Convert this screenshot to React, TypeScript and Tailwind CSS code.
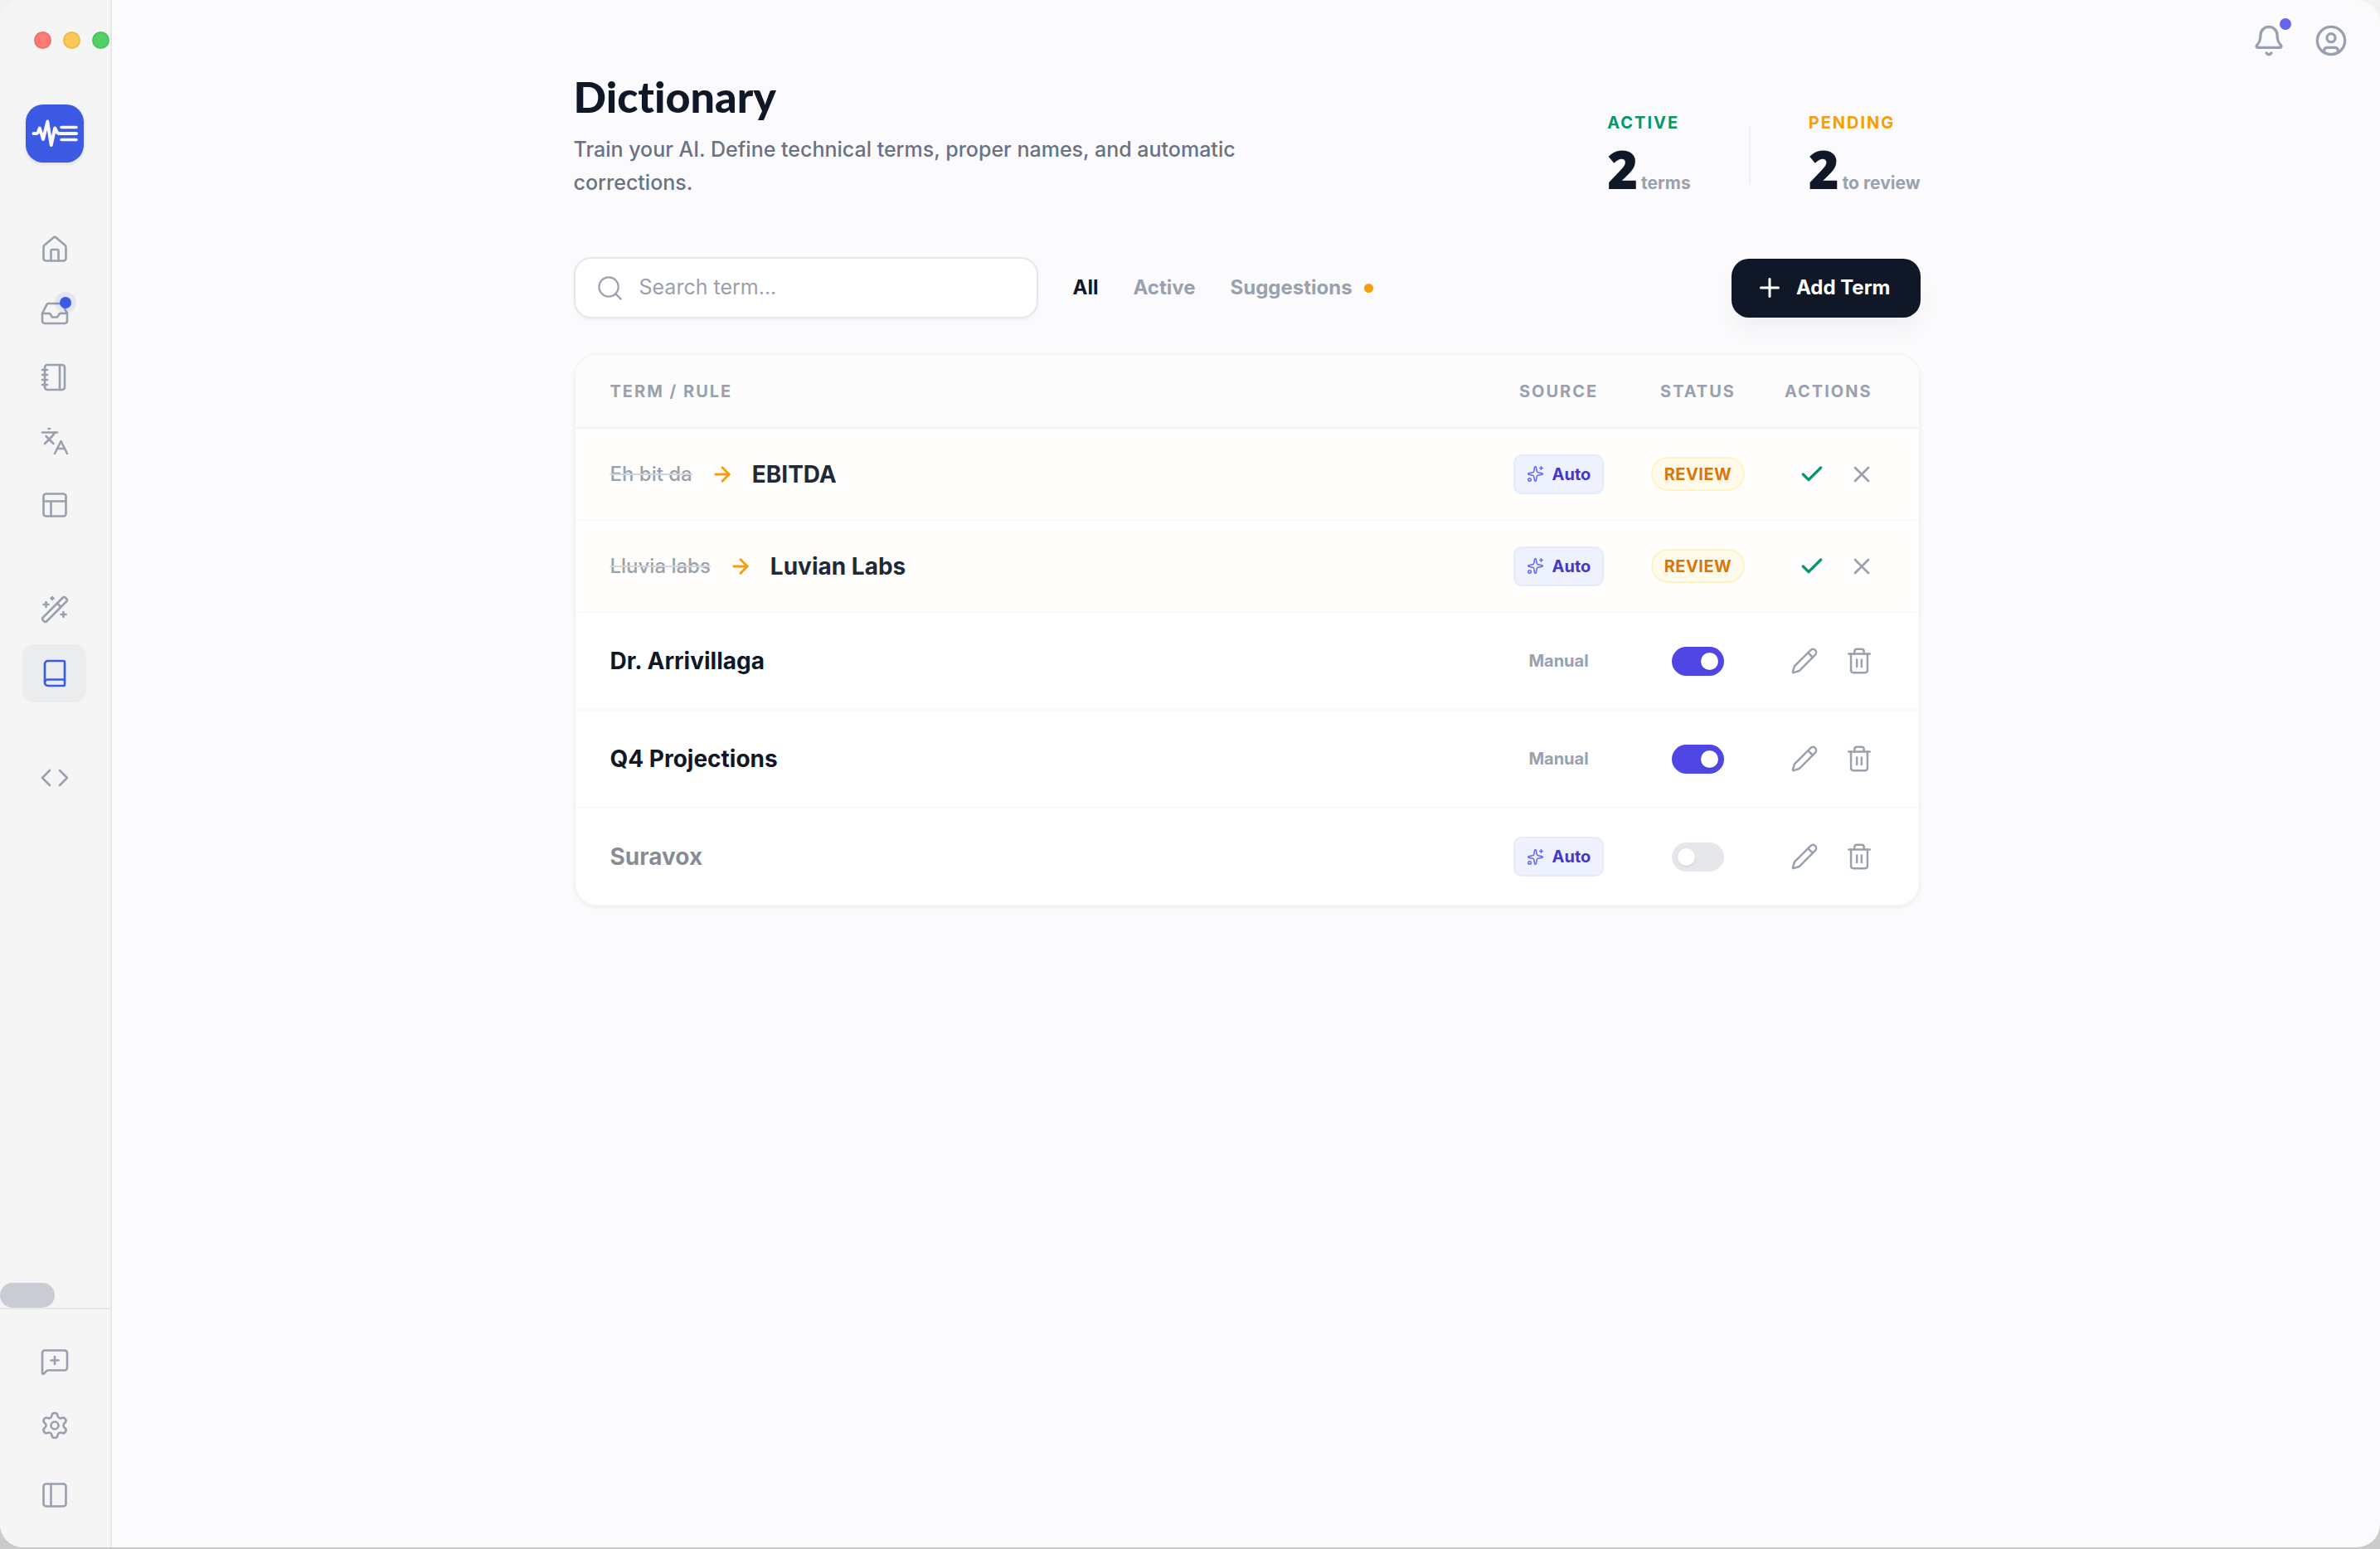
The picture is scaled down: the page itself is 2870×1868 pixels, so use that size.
import * as React from "react";
import {
  ArrowRight,
  Bell,
  Book,
  Check,
  CircleUser,
  Code,
  House,
  Inbox,
  Languages,
  MessageSquarePlus,
  Notebook,
  PanelLeft,
  PanelsTopLeft,
  Pencil,
  Plus,
  Search,
  Settings,
  Sparkles,
  Trash2,
  WandSparkles,
  X,
  type LucideIcon,
} from "lucide-react";

interface NavItem {
  label: string;
  icon: LucideIcon;
  hasUnread?: boolean;
}

interface Term {
  id: number;
  original?: string;
  term: string;
  source: "auto" | "manual";
  status: "review" | "on" | "off";
}

const NAV_GROUPS: NavItem[][] = [
  [
    { label: "Home", icon: House },
    { label: "Inbox", icon: Inbox, hasUnread: true },
    { label: "Notes", icon: Notebook },
    { label: "Translate", icon: Languages },
    { label: "Templates", icon: PanelsTopLeft },
  ],
  [
    { label: "Styles", icon: WandSparkles },
    { label: "Dictionary", icon: Book },
  ],
  [{ label: "Developers", icon: Code }],
];

const INITIAL_TERMS: Term[] = [
  { id: 1, original: "Eh bit da", term: "EBITDA", source: "auto", status: "review" },
  { id: 2, original: "Lluvia labs", term: "Luvian Labs", source: "auto", status: "review" },
  { id: 3, term: "Dr. Arrivillaga", source: "manual", status: "on" },
  { id: 4, term: "Q4 Projections", source: "manual", status: "on" },
  { id: 5, term: "Suravox", source: "auto", status: "off" },
];

const Logo: React.FC = () => (
  <div className="w-[70px] h-[70px] rounded-[21px] bg-[#3d5ae5] shadow-[0_2px_4px_rgba(0,0,0,0.1)]">
    <svg
      viewBox="0 0 70 70"
      fill="none"
      stroke="#f8f8fa"
      strokeWidth="4"
      strokeLinecap="round"
      strokeLinejoin="round"
    >
      <path d="M9.500 35H12.500Q14.500 35 15.300 32.500L16.800 28.500L21 42L26.300 20.500L30.700 49L35.200 28.500L37.500 33Q38.500 35 41 35H61" />
      <path d="M43 27.500H61M43 42.500H61" strokeWidth="3.500" />
    </svg>
  </div>
);

const SidebarLink: React.FC<{ item: NavItem; active?: boolean }> = ({
  item,
  active,
}) => {
  const Icon = item.icon;
  return (
    <a
      href="#"
      aria-label={item.label}
      aria-current={active ? "page" : undefined}
      className={
        "flex items-center justify-center w-[77px] h-[70px] rounded-[14px] " +
        (active ? "bg-[#ebecee] text-[#3d5ae5]" : "text-gray-400")
      }
    >
      <span className="relative">
        <Icon size={36} strokeWidth={1.75} />
        {item.hasUnread && (
          <span className="absolute -top-2 -right-2 flex items-center justify-center w-[26px] h-[26px] rounded-full bg-[#3d5ae5]/10">
            <span className="w-[14px] h-[14px] rounded-full bg-[#3d5ae5]" />
          </span>
        )}
      </span>
    </a>
  );
};

const Sidebar: React.FC = () => (
  <aside className="flex flex-col w-[135px] shrink-0 bg-[#f5f5f5] border-r-2 border-gray-200">
    <div className="flex gap-[14px] self-end pt-[38px] pr-px">
      <span className="w-[21px] h-[21px] rounded-full bg-[#ff7b75] border-2 border-[#ee706b]" />
      <span className="w-[21px] h-[21px] rounded-full bg-[#fdc855] border-2 border-[#eebb50]" />
      <span className="w-[21px] h-[21px] rounded-full bg-[#53d167] border-2 border-[#4bc35e]" />
    </div>
    <div className="pt-[67px] pb-[70px] pl-[31px]">
      <Logo />
    </div>
    <nav className="flex flex-col gap-14 grow pl-[27px]">
      {NAV_GROUPS.map((group, index) => (
        <div key={index} className="flex flex-col gap-[7px]">
          {group.map((item) => (
            <SidebarLink
              key={item.label}
              item={item}
              active={item.label === "Dictionary"}
            />
          ))}
        </div>
      ))}
    </nav>
    <div className="w-[66px] h-[30px] rounded-full bg-[#c9ccd3]" />
    <div className="flex flex-col py-7 pl-[27px] border-t-2 border-gray-200">
      <div className="flex flex-col gap-[7px] pb-[14px]">
        <SidebarLink item={{ label: "Feedback", icon: MessageSquarePlus }} />
        <SidebarLink item={{ label: "Settings", icon: Settings }} />
      </div>
      <SidebarLink item={{ label: "Toggle sidebar", icon: PanelLeft }} />
    </div>
  </aside>
);

interface StatProps {
  label: string;
  labelColor: string;
  count: number;
  unit: string;
}

const Stat: React.FC<StatProps> = (props) => (
  <div className="pb-1">
    <div
      className={
        "text-[20px] leading-7 font-bold tracking-widest " + props.labelColor
      }
    >
      {props.label}
    </div>
    <div className="flex items-baseline gap-1 pt-[10px]">
      <span className="font-[Open_Sans] font-extrabold text-[63px] leading-[63px] text-gray-900">
        {props.count}
      </span>
      <span className="text-[21px] font-bold text-gray-400">{props.unit}</span>
    </div>
  </div>
);

const SourceBadge: React.FC<{ source: Term["source"] }> = ({ source }) => {
  if (source === "manual") {
    return <span className="text-[20px] font-bold text-gray-400">Manual</span>;
  }
  return (
    <span className="inline-flex items-center gap-[10px] h-12 px-[14px] rounded-[10px] border-2 border-[#e5ebff] bg-[#eef2ff] text-[20px] font-bold text-[#4338ca] align-middle">
      <Sparkles size={21} strokeWidth={1.75} className="text-[#6366f1]" />
      Auto
    </span>
  );
};

interface TermRowProps {
  item: Term;
  onChangeStatus: (id: number, status: Term["status"]) => void;
  onRemove: (id: number) => void;
}

const TermRow: React.FC<TermRowProps> = ({ item, onChangeStatus, onRemove }) => {
  const isReview = item.status === "review";

  let statusElement;
  let actionsElement;

  if (isReview) {
    statusElement = (
      <span className="inline-flex items-center h-[41px] px-[14px] rounded-full border-2 border-[#fef3c7] bg-[#fffbeb] text-[20px] font-bold tracking-wide text-[#d97706] align-middle">
        REVIEW
      </span>
    );
    actionsElement = (
      <div className="flex justify-end gap-[14px]">
        <button
          aria-label={"Accept " + item.term}
          className="p-[7px] text-[#059669]"
          onClick={() => onChangeStatus(item.id, "on")}
        >
          <Check size={32} strokeWidth={2.5} />
        </button>
        <button
          aria-label={"Dismiss " + item.term}
          className="p-[7px] text-gray-400"
          onClick={() => onRemove(item.id)}
        >
          <X size={32} strokeWidth={2} />
        </button>
      </div>
    );
  } else {
    statusElement = (
      <input
        type="checkbox"
        role="switch"
        aria-label={item.term + " enabled"}
        checked={item.status === "on"}
        onChange={(e) => onChangeStatus(item.id, e.target.checked ? "on" : "off")}
        className="appearance-none inline-flex w-[63px] h-[35px] p-[7px] rounded-full bg-gray-200 checked:bg-[#4f46e5] checked:justify-end align-middle before:block before:w-[21px] before:h-[21px] before:rounded-full before:bg-white before:shadow-sm"
      />
    );
    actionsElement = (
      <div className="flex justify-end gap-[14px]">
        <button
          aria-label={"Edit " + item.term}
          className="p-[9px] text-gray-400"
        >
          <Pencil size={34} strokeWidth={1.75} />
        </button>
        <button
          aria-label={"Delete " + item.term}
          className="p-[9px] text-gray-400"
          onClick={() => onRemove(item.id)}
        >
          <Trash2 size={34} strokeWidth={1.75} />
        </button>
      </div>
    );
  }

  return (
    <tr
      className={
        "border-b-2 border-gray-50 last:border-b-0 " +
        (isReview ? "h-[111px] bg-[#fffefc]" : "h-[118px] last:h-[117px]")
      }
    >
      <td className="pl-[42px]">
        <div className="flex items-center gap-[22px]">
          {item.original && (
            <>
              <span className="text-[24px] font-medium text-gray-400 line-through decoration-gray-300">
                {item.original}
              </span>
              <ArrowRight
                size={28}
                strokeWidth={2.5}
                className="text-[#f59e0b]"
              />
            </>
          )}
          <span
            className={
              "text-[28px] font-bold " +
              (isReview
                ? "text-gray-800"
                : item.status === "off"
                ? "text-gray-900/50"
                : "text-gray-900")
            }
          >
            {item.term}
          </span>
        </div>
      </td>
      <td className="text-center">
        <SourceBadge source={item.source} />
      </td>
      <td className="text-center">{statusElement}</td>
      <td className="pr-[46px]">{actionsElement}</td>
    </tr>
  );
};

const FILTERS = ["All", "Active", "Suggestions"];

const DictionaryView: React.FC = () => {
  const [terms, setTerms] = React.useState(INITIAL_TERMS);
  const [filter, setFilter] = React.useState("All");
  const [query, setQuery] = React.useState("");

  const changeStatus = (id: number, status: Term["status"]) => {
    setTerms(terms.map((t) => (t.id === id ? { ...t, status } : t)));
  };

  const remove = (id: number) => {
    setTerms(terms.filter((t) => t.id !== id));
  };

  const activeCount = terms.filter((t) => t.status === "on").length;
  const pendingCount = terms.filter((t) => t.status === "review").length;

  const visibleTerms = terms.filter((t) => {
    if (filter === "Active" && t.status !== "on") return false;
    if (filter === "Suggestions" && t.status !== "review") return false;
    return t.term.toLowerCase().includes(query.toLowerCase());
  });

  return (
    <div className="w-full max-w-[1624px] mx-auto">
      <header className="flex items-end justify-between">
        <div className="max-w-[810px]">
          <h1 className="font-[Lato] font-black text-[52px] leading-[60px] text-gray-900 [font-variant-ligatures:none]">
            Dictionary
          </h1>
          <p className="pt-[14px] text-[25px] leading-10 font-medium text-gray-500">
            Train your AI. Define technical terms, proper names, and automatic
            corrections.
          </p>
        </div>
        <div className="flex items-center gap-[70px]">
          <Stat
            label="ACTIVE"
            labelColor="text-[#059669]"
            count={activeCount}
            unit="terms"
          />
          <div className="w-[2px] h-[70px] bg-[#eeeff1]" />
          <Stat
            label="PENDING"
            labelColor="text-[#f59e0b]"
            count={pendingCount}
            unit="to review"
          />
        </div>
      </header>

      <div className="flex items-center gap-[42px] pt-[70px]">
        <label className="flex items-center gap-[18px] w-[560px] h-[74px] px-6 rounded-[21px] border-2 border-gray-200 bg-white shadow-[0_2px_4px_rgba(0,0,0,0.05)]">
          <Search
            size={35}
            strokeWidth={1.5}
            className="shrink-0 text-gray-400"
          />
          <input
            type="text"
            aria-label="Search term"
            placeholder="Search term..."
            value={query}
            onChange={(e) => setQuery(e.target.value)}
            className="min-w-0 grow text-[25px] text-gray-900 placeholder:text-gray-400 outline-none"
          />
        </label>
        {FILTERS.map((name) => (
          <button
            key={name}
            onClick={() => setFilter(name)}
            className={
              "flex items-center gap-[14px] text-[24px] font-bold " +
              (filter === name ? "text-gray-900" : "text-gray-400")
            }
          >
            {name}
            {name === "Suggestions" && pendingCount > 0 && (
              <span className="w-[11px] h-[11px] rounded-full bg-[#f59e0b]" />
            )}
          </button>
        ))}
        <button className="flex items-center gap-[14px] h-[71px] ml-auto pl-7 pr-9 rounded-[21px] bg-gray-900 text-[24px] font-bold text-white shadow-[0_16px_28px_-4px_#eeeff2]">
          <Plus size={36} strokeWidth={2} />
          Add Term
        </button>
      </div>

      <div className="mt-[42px] rounded-[28px] border-2 border-gray-100 bg-white shadow-[0_2px_4px_rgba(0,0,0,0.05)] overflow-hidden">
        <table className="w-full table-fixed">
          <thead>
            <tr className="h-[88px] border-b-2 border-gray-100 bg-[#fcfcfd] text-[20px] text-gray-400 tracking-widest">
              <th className="pl-[42px] text-left font-bold">TERM / RULE</th>
              <th className="w-[168px] font-bold">SOURCE</th>
              <th className="w-[168px] font-bold">STATUS</th>
              <th className="w-[182px] pr-14 text-right font-bold">ACTIONS</th>
            </tr>
          </thead>
          <tbody>
            {visibleTerms.map((item) => (
              <TermRow
                key={item.id}
                item={item}
                onChangeStatus={changeStatus}
                onRemove={remove}
              />
            ))}
          </tbody>
        </table>
      </div>
    </div>
  );
};

const App: React.FC = () => (
  <div className="h-screen pb-[2px] bg-linear-to-b from-[#f2f2f2] from-80% to-[#cacaca] font-[Inter,sans-serif]">
    <div className="flex h-full rounded-[28px] overflow-hidden bg-[#fbfbfd]">
      <Sidebar />
      <main className="relative grow pt-[86px] pl-[58px] pr-14">
        <div className="absolute top-[29px] right-[39px] flex gap-[35px] text-gray-400">
          <button aria-label="Notifications" className="relative">
            <Bell size={40} strokeWidth={2} />
            <span className="absolute -top-[11px] -right-[11px] w-[22px] h-[22px] rounded-full border-4 border-white bg-[#6366f1]" />
          </button>
          <button aria-label="Account">
            <CircleUser size={40} strokeWidth={2} />
          </button>
        </div>
        <DictionaryView />
      </main>
    </div>
  </div>
);

export default App;
